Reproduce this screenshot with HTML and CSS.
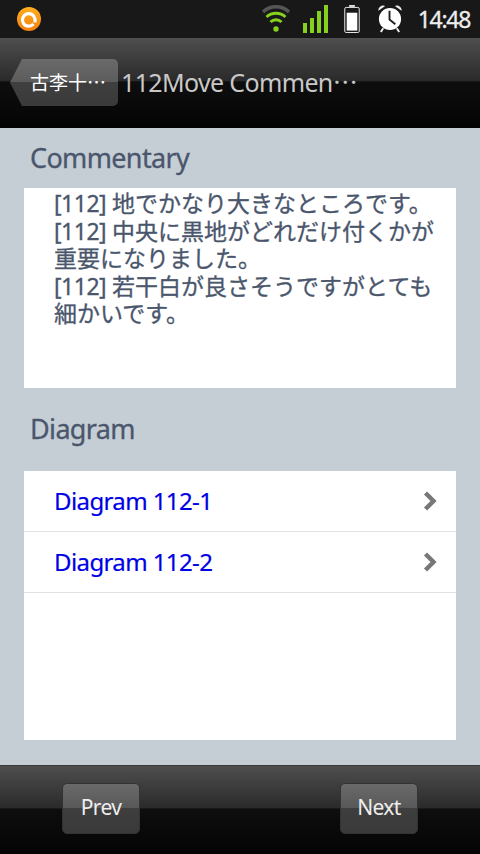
FILE: index.html
```html
<!DOCTYPE html>
<html lang="ja">
<head>
<meta charset="utf-8">
<title>112Move Commentary</title>
<link rel="stylesheet" href="styles.css">
</head>
<body>
<div class="app">
  <div class="status">
    <svg class="app-icon" width="24" height="24" viewBox="0 0 24 24">
      <defs><linearGradient id="og" x1="0" y1="0" x2="0" y2="1"><stop offset="0" stop-color="#ffb01e"/><stop offset="1" stop-color="#f57f0c"/></linearGradient></defs>
      <circle cx="12" cy="12" r="12" fill="url(#og)"/>
      <path d="M16.500 17 A6.300 6.300 0 1 1 18 12 V15.500" fill="none" stroke="#fff" stroke-width="3.200"/>
    </svg>
    <div class="status-right">
      <svg class="wifi" width="28" height="28" viewBox="1 1 28 28">
        <path d="M2 8 A19 19 0 0 1 28 8" fill="none" stroke="#555" stroke-width="3.500"/>
        <path d="M5.500 13 A14 14 0 0 1 24.500 13" fill="none" stroke="#86d01e" stroke-width="3"/>
        <path d="M9.500 18 A8 8 0 0 1 20.500 18" fill="none" stroke="#86d01e" stroke-width="3"/>
        <circle cx="15" cy="25" r="2.700" fill="#86d01e"/>
      </svg>
      <div class="signal"><i class="s1"></i><i class="s2"></i><i class="s3"></i><i class="s4"></i></div>
      <svg class="battery" width="16" height="28" viewBox="0 0 16 29">
        <rect x="5" y="0" width="6" height="2" fill="#ddd"/>
        <rect x="0.500" y="2.500" width="15" height="26" rx="1.500" fill="none" stroke="#eee"/>
        <rect x="2.500" y="8" width="11" height="18.500" fill="#fff"/>
      </svg>
      <svg class="alarm" width="24" height="28" viewBox="1 1 24 29">
        <path d="M1 7 A5 5 0 0 1 8 2 Z M25 7 A5 5 0 0 0 18 2 Z" fill="#eee"/>
        <path d="M6 25 L3.500 29 M20 25 L22.500 29" stroke="#eee" stroke-width="2"/>
        <circle cx="13" cy="15.500" r="11.500" fill="#fff"/>
        <path d="M12.500 7 V16 L18.500 21" fill="none" stroke="#222" stroke-width="2"/>
      </svg>
      <span class="clock">14:48</span>
    </div>
  </div>
  <header class="nav">
    <div class="back"><span class="cjk">古李十…</span></div>
    <div class="title">112Move Commen<span class="cjk">…</span></div>
  </header>
  <main class="content">
    <h2 class="heading first">Commentary</h2>
    <div class="comment">
      <p><span class="tag">[112]</span> 地でかなり大きなところです。</p>
      <p><span class="tag">[112]</span> 中央に黒地がどれだけ付くかが重要になりました。</p>
      <p><span class="tag">[112]</span> 若干白が良さそうですがとても細かいです。</p>
    </div>
    <h2 class="heading second">Diagram</h2>
    <ul class="list">
      <li><a>Diagram 112-1</a><svg width="16" height="22" viewBox="0 0 16 22"><path d="M3.500 3 L11.500 11 L3.500 19" fill="none" stroke="#777" stroke-width="4.400"/></svg></li>
      <li><a>Diagram 112-2</a><svg width="16" height="22" viewBox="0 0 16 22"><path d="M3.500 3 L11.500 11 L3.500 19" fill="none" stroke="#777" stroke-width="4.400"/></svg></li>
    </ul>
  </main>
  <footer class="foot">
    <div class="btn"><span>Prev</span></div>
    <div class="btn"><span>Next</span></div>
  </footer>
</div>
</body>
</html>
```
FILE: styles.css
```css
* { box-sizing: border-box; }
html, body { margin: 0; padding: 0; }
body { font-family: "Noto Sans", "Noto Sans CJK JP", sans-serif; background: #000; }
.app { width: 480px; height: 854px; display: flex; flex-direction: column; overflow: hidden; }
.cjk { font-family: "Noto Sans CJK JP", sans-serif; }

.status { height: 38px; background: #181818; display: flex; align-items: center; justify-content: space-between; padding: 0 10px 0 17px; }
.status-right { display: flex; align-items: center; }
.wifi { margin-right: 13px; }
.signal { display: flex; align-items: flex-end; gap: 3px; height: 28px; margin-right: 16px; }
.signal i { display: block; width: 4px; background: #86d01e; }
.s1 { height: 10px; }
.s2 { height: 15px; }
.s3 { height: 22px; }
.s4 { height: 28px; }
.battery { margin-right: 18px; }
.alarm { margin-right: 16px; }
.clock { color: #eee; font-size: 23px; line-height: 28px; letter-spacing: -1.300px; -webkit-text-stroke: 0.3px #eee; }

.nav, .foot { background: linear-gradient(#4f4f4f 0, #4a4a4a 5px, #2a2a2a 48%, #0e0e0e 48.500%, #040404 100%); }
.nav { height: 90px; display: flex; align-items: center; padding-left: 10px; }
.back { width: 108px; height: 47px; margin-top: -1px; display: flex; align-items: center; justify-content: center; padding: 0 0 3px 8px; color: #fff; font-size: 19px; background: linear-gradient(#6a6a6a 0, #5c5c5c 49%, #3f3f3f 50%, #3a3a3a 100%); clip-path: polygon(12px 0, 100% 0, 100% 100%, 12px 100%, 0 50%); border-radius: 0 5px 5px 0; }
.title { color: #c8c8c8; font-size: 25px; letter-spacing: -0.650px; margin-left: 3px; margin-top: -4px; white-space: nowrap; }

.content { flex: 1; background: #c5cdd5; padding: 0 24px 25px; display: flex; flex-direction: column; }
.heading { margin: 0; color: #4a566c; font-size: 27px; font-weight: 400; line-height: 36px; padding-left: 6px; letter-spacing: -0.650px; -webkit-text-stroke: 0.3px #4a566c; }
.first { margin-top: 12px; margin-bottom: 12px; }
.second { margin-top: 23px; margin-bottom: 24px; }
.comment { height: 200px; background: #fff; padding: 2px 18px 0 30px; color: #4a566c; font-size: 23px; line-height: 27.500px; -webkit-text-stroke: 0.3px #4a566c; overflow: hidden; }
.comment p { margin: 0; }
.tag { letter-spacing: -0.500px; }
.list { flex: 1; margin: 0; padding: 0; list-style: none; background: #fff; }
.list li { height: 61px; border-bottom: 1px solid #e2e2e2; display: flex; align-items: center; justify-content: space-between; padding: 0 18px 0 30px; }
.list a { color: #0000e6; font-size: 24px; letter-spacing: -0.600px; margin-top: -2px; -webkit-text-stroke: 0.2px #0000e6; }

.foot { height: 89px; display: flex; justify-content: space-between; align-items: center; padding: 0 62px; border-top: 1px solid #3a3a3a; }
.btn { width: 78px; height: 51px; margin-top: -3px; border-radius: 5px; border: 1px solid #333; color: #eee; font-size: 21px; letter-spacing: -0.600px; display: flex; align-items: center; justify-content: center; background: linear-gradient(#6a6a6a 0, #585858 49%, #3e3e3e 50%, #3a3a3a 100%); }
.btn span { margin-top: -3px; }
```
